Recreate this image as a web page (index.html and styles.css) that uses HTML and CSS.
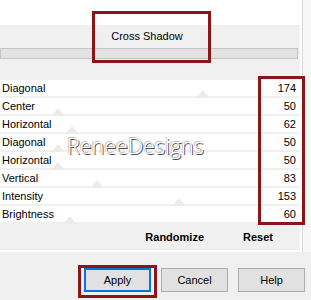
FILE: index.html
```html
<!DOCTYPE html>
<html lang="en">
<head>
  <meta charset="UTF-8">
  <title>Cross Shadow</title>
  <link rel="stylesheet" href="styles.css">
</head>
<body>

<div class="dialog">
  <div class="panel">
    <div class="panel-main">
      <div class="head"></div>
      <div class="title">Cross Shadow</div>
      <div class="track"></div>

      <!-- sliders -->
      <div class="rows">
        <div class="row"><span class="thumb" style="left: 196px"></span><span class="label">Diagonal</span><span class="value">174</span></div>
        <div class="row"><span class="thumb" style="left: 51px"></span><span class="label">Center</span><span class="value">50</span></div>
        <div class="row"><span class="thumb" style="left: 65px"></span><span class="label">Horizontal</span><span class="value">62</span></div>
        <div class="row"><span class="thumb" style="left: 51px"></span><span class="label">Diagonal</span><span class="value">50</span></div>
        <div class="row"><span class="thumb" style="left: 51px"></span><span class="label">Horizontal</span><span class="value">50</span></div>
        <div class="row"><span class="thumb" style="left: 90px"></span><span class="label">Vertical</span><span class="value">83</span></div>
        <div class="row"><span class="thumb" style="left: 172px"></span><span class="label">Intensity</span><span class="value">153</span></div>
        <div class="row"><span class="thumb" style="left: 63px"></span><span class="label">Brightness</span><span class="value">60</span></div>
      </div>

      <div class="actions">
        <span class="action">Randomize</span>
        <span class="action action-reset">Reset</span>
      </div>
    </div>
    <div class="panel-edge"></div>
  </div>

  <div class="buttons">
    <button class="btn btn-default">Apply</button>
    <button class="btn">Cancel</button>
    <button class="btn">Help</button>
  </div>

  <!-- overlays -->
  <div class="watermark">ReneeDesigns</div>
  <div class="mark mark-title"></div>
  <div class="mark mark-values"></div>
  <div class="mark mark-apply"></div>
</div>

</body>
</html>
```

FILE: styles.css
```css
body {
  margin: 0;
  font-family: 'Liberation Sans', Arial, sans-serif;
  font-size: 11px;
  color: #000;
  background-color: #f0f0f0;
}
.dialog {
  position: relative;
  width: 311px;
  height: 300px;
  overflow: hidden;
}
.panel {
  display: flex;
}
.panel-main {
  width: 300px;
  border-right: 2px solid #fff;
  border-bottom: 2px solid #fff;
}
.panel-edge {
  flex: 1;
  background-color: #f7f7f7;
  border-left: 1px solid #dadada;
}
.head {
  height: 25px;
  background-color: #fff;
}
.title {
  height: 23px;
  line-height: 23px;
  text-align: center;
  padding-right: 6px;
}
.track {
  height: 9px;
  margin-right: 2px;
  background-color: #e2e2e2;
  border: 1px solid #c4c4c4;
}
.rows {
  margin-top: 21px;
}
.row {
  position: relative;
  display: flex;
  justify-content: space-between;
  height: 16px;
  line-height: 16px;
  background-color: #fff;
  border-bottom: 2px solid #f0f0f0;
  padding: 0 4px 0 2px;
}
.label, .value {
  position: relative;
}
.thumb {
  position: absolute;
  bottom: -2px;
  width: 14px;
  height: 8px;
  background-color: #ececec;
  clip-path: polygon(50% 0, 100% 100%, 0 100%);
}
.actions {
  display: flex;
  justify-content: flex-end;
  gap: 39px;
  height: 26px;
  line-height: 26px;
  padding-right: 27px;
  font-weight: bold;
}
.buttons {
  display: flex;
  justify-content: flex-end;
  gap: 10px;
  margin-top: 16px;
  padding-right: 6px;
}
.btn {
  width: 67px;
  height: 24px;
  font-family: 'Liberation Sans', Arial, sans-serif;
  font-size: 11px;
  color: #000;
  background-color: #e1e1e1;
  border: 1px solid #adadad;
  padding: 0;
}
.btn-default {
  border: 2px solid #0078d7;
}
.watermark {
  position: absolute;
  left: 67px;
  top: 131px;
  font-family: 'Open Sans', sans-serif;
  font-weight: 300;
  font-size: 21.5px;
  color: #fff;
  text-shadow: 1px 1px 0 #4a4a4a, -1px -1px 0 #c0c0c0;
}
.mark {
  position: absolute;
  border: 3px solid #8c1616;
}
.mark-title {
  left: 92px;
  top: 11px;
  width: 113px;
  height: 46px;
}
.mark-values {
  left: 258px;
  top: 76px;
  width: 41px;
  height: 143px;
}
.mark-apply {
  left: 78px;
  top: 265px;
  width: 73px;
  height: 27px;
}
```
